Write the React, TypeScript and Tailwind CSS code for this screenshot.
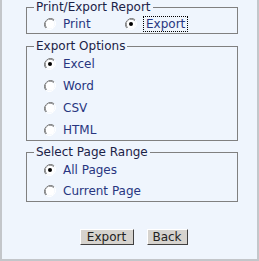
import React from "react";

const Radio = ({ checked }: { checked?: boolean }) => (
  <svg width="12" height="12" viewBox="0 0 12 12" className="shrink-0">
    <path d="M10.2 1.8 A6 6 0 0 0 1.8 10.2" fill="none" stroke="#808080" strokeWidth="1" />
    <path d="M9.5 2.5 A5 5 0 0 0 2.5 9.5" fill="none" stroke="#404040" strokeWidth="1" />
    <path d="M1.8 10.2 A6 6 0 0 0 10.2 1.8" fill="none" stroke="#ffffff" strokeWidth="1" />
    <circle cx="6" cy="6" r="4.5" fill="#ffffff" />
    {checked && <circle cx="6" cy="6" r="2" fill="#000000" />}
  </svg>
);

const Option = ({ label, checked, focus }: { label: string; checked?: boolean; focus?: boolean }) => (
  <div className="flex items-center gap-[7px]">
    <Radio checked={checked} />
    <span className={focus ? "outline outline-1 outline-dotted outline-black px-[2px] leading-[14px]" : ""}>{label}</span>
  </div>
);

const Group = ({ title, children, className }: { title: string; children: React.ReactNode; className?: string }) => (
  <fieldset className={"border border-[#808080] " + (className ?? "")}>
    <legend className="ml-[7px] px-[2px] leading-[14px] text-[#1b2247]">{title}</legend>
    <div className="pl-[17px] flex flex-col">{children}</div>
  </fieldset>
);

export default function App() {
  return (
    <div
      className="w-[259px] h-[261px] bg-[#eff5fd] border-l-2 border-r-2 border-b-2 border-[#c3c6ca] pl-[24px] text-[12px] text-[#283580]"
      style={{ fontFamily: "Tahoma, 'DejaVu Sans', sans-serif" }}
    >
      <div className="w-[212px] flex flex-col">
        <Group title="Print/Export Report">
          <div className="flex h-[19px] items-center">
            <div className="w-[81px]">
              <Option label="Print" />
            </div>
            <Option label="Export" checked focus />
          </div>
        </Group>

        <Group title="Export Options" className="mt-[5px]">
          <div className="h-[22px] flex items-center"><Option label="Excel" checked /></div>
          <div className="h-[22px] flex items-center"><Option label="Word" /></div>
          <div className="h-[22px] flex items-center"><Option label="CSV" /></div>
          <div className="h-[21px] flex items-center"><Option label="HTML" /></div>
        </Group>

        <Group title="Select Page Range" className="mt-[4px]">
          <div className="h-[21px] flex items-center"><Option label="All Pages" checked /></div>
          <div className="h-[21px] flex items-center"><Option label="Current Page" /></div>
        </Group>
      </div>

      <div className="w-[212px] flex justify-center gap-[13px] mt-[27px] pl-[3px]">
        <button className="w-[54px] h-[16px] bg-[#d6d3ce] border border-t-white border-l-white border-r-[#404040] border-b-[#404040] text-[#222] leading-[13px]">
          Export
        </button>
        <button className="w-[41px] h-[16px] bg-[#d6d3ce] border border-t-white border-l-white border-r-[#404040] border-b-[#404040] text-[#222] leading-[13px]">
          Back
        </button>
      </div>
    </div>
  );
}
